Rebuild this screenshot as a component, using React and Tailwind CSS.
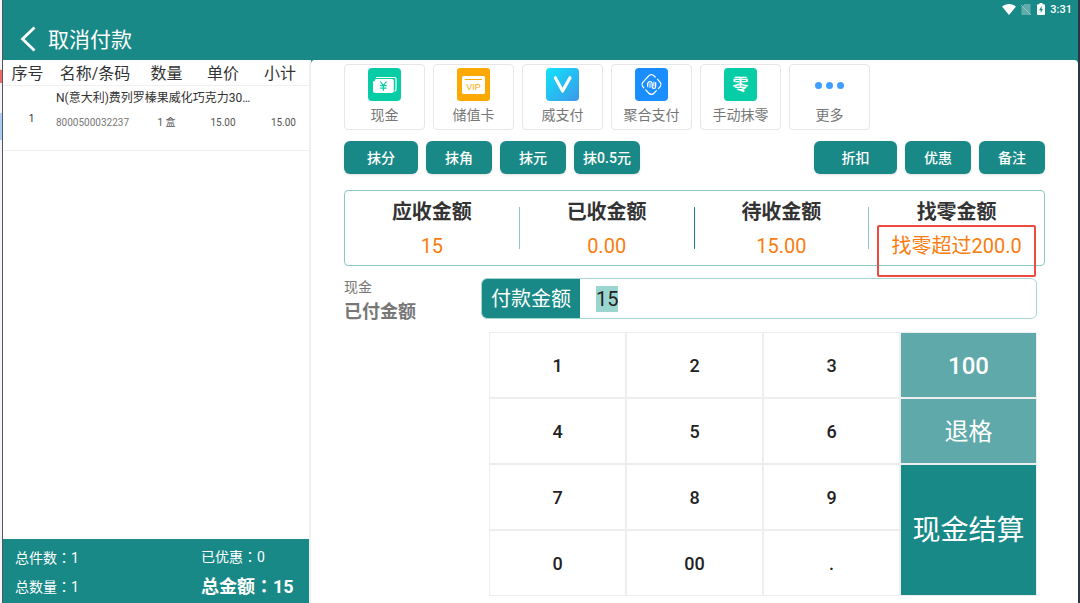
import React, { useEffect, useRef, useState } from 'react';

const CashIcon = () => (
  <svg viewBox="0 0 33 33" className="w-[33px] h-[33px]" aria-hidden="true">
    <rect width="33" height="33" rx="4" fill="#06cda5" />
    <path d="M7.5 11H24a1.8 1.8 0 0 1 1.8 1.8V23a2 2 0 0 1-2 2H7a2 2 0 0 1-2-2v-9.600A2.400 2.400 0 0 0 7.500 11z" fill="#fff" />
    <path d="M8 9.500h18.500a1.500 1.500 0 0 1 1.500 1.500V21.500a1.500 1.500 0 0 1-1.500 1.500" fill="none" stroke="#fff" strokeWidth="1.200" />
    <path d="M12.300 13.500l3.100 4 3.100-4M12.200 17.700h6.400M12.200 20.100h6.400M15.400 17.500v5.300" fill="none" stroke="#06cda5" strokeWidth="1.200" />
  </svg>
);

const VipIcon = () => (
  <svg viewBox="0 0 33 33" className="w-[33px] h-[33px]" aria-hidden="true">
    <rect width="33" height="33" rx="3" fill="#fca903" />
    <rect x="5" y="8" width="23" height="18" rx="1.5" fill="#fff" />
    <path d="M8 11.500h17" stroke="#fca903" strokeWidth="1" />
    <text x="16.500" y="22" textAnchor="middle" fontSize="9" fontFamily="Liberation Sans, sans-serif" fill="#fca903">VIP</text>
  </svg>
);

const WeiIcon = () => (
  <svg viewBox="0 0 33 33" className="w-[33px] h-[33px]" aria-hidden="true">
    <defs>
      <linearGradient id="wei" x1="0" y1="0" x2="1" y2="1">
        <stop offset="0" stopColor="#10e4fb" />
        <stop offset="1" stopColor="#3d97e8" />
      </linearGradient>
    </defs>
    <rect width="33" height="33" rx="4" fill="url(#wei)" />
    <path d="M9.300 9.800L16.600 23 24 9.800" fill="none" stroke="#fff" strokeWidth="3.200" strokeLinecap="round" strokeLinejoin="round" />
  </svg>
);

const UnionIcon = () => (
  <svg viewBox="0 0 33 33" className="w-[33px] h-[33px]" aria-hidden="true">
    <rect width="33" height="33" rx="4" fill="#1b8eff" />
    <g fill="none" stroke="#fff" strokeLinecap="round">
      <path d="M8.800 19.800l-1.200-1.500a3 3 0 0 1 0-3.600L13.600 8a3.600 3.600 0 0 1 5.600 0l1 1" strokeWidth="1.200" />
      <path d="M22.400 11.200l3 3.500a3 3 0 0 1 0 3.600l-2 2.400" strokeWidth="1.200" />
      <path d="M21.400 22.600L19.200 25a3.600 3.600 0 0 1-5.600 0l-2.800-3.200" strokeWidth="1.200" />
      <path d="M12.700 18.500v-3a2.300 2.300 0 0 1 4.500 0v3.200a1.700 1.700 0 0 0 3.400 0v-4" strokeWidth="1.300" />
      <path d="M15 19.500v-4M18.900 18v-4" strokeWidth="1" />
    </g>
  </svg>
);

const RoundIcon = () => (
  <span className="flex items-center justify-center w-[33px] h-[33px] rounded bg-[#06cda5] text-white text-base font-bold leading-none">
    零
  </span>
);

const MoreIcon = () => (
  <svg viewBox="0 0 33 33" className="w-[33px] h-[33px]" fill="#409eff" aria-hidden="true">
    <circle cx="5.500" cy="17.500" r="3.500" />
    <circle cx="16.500" cy="17.500" r="3.500" />
    <circle cx="27.500" cy="17.500" r="3.500" />
  </svg>
);

const METHODS = [
  { name: '现金', Icon: CashIcon },
  { name: '储值卡', Icon: VipIcon },
  { name: '威支付', Icon: WeiIcon },
  { name: '聚合支付', Icon: UnionIcon },
  { name: '手动抹零', Icon: RoundIcon },
  { name: '更多', Icon: MoreIcon },
];

const SUMMARY = [
  { label: '应收金额', value: '15' },
  { label: '已收金额', value: '0.00' },
  { label: '待收金额', value: '15.00' },
  { label: '找零金额', value: '找零超过200.0', warn: true },
];

const ActionButton = ({ wide, children }) => (
  <button
    type="button"
    className={`h-[33px] rounded-md bg-[#198987] text-white text-sm font-medium shadow-sm ${wide || 'w-[66px]'}`}
  >
    {children}
  </button>
);

const Key = ({ children, onClick, className = 'bg-white text-lg font-medium text-[#222]' }) => (
  <button type="button" onClick={onClick} className={`pt-[2px] ${className}`}>
    {children}
  </button>
);

const Colon = () => <span className="font-['Noto_Sans_CJK_TC',sans-serif]">：</span>;

const StatusBar = () => (
  <div className="flex items-center justify-end h-[18px] pr-1.5 text-white">
    <svg viewBox="0 0 14 11" className="w-[14px] h-[11px] mr-[5px]" fill="#fff" aria-hidden="true">
      <path d="M0 2.600C4-.8 10-.8 14 2.600L7 11z" />
    </svg>
    <svg viewBox="0 0 10 11" className="w-[10px] h-[11px] mr-[6px]" aria-hidden="true">
      <path d="M3.500 0H9.500V11H.5V3z" fill="#fff" opacity=".3" />
      <path d="M0 1l10 10" stroke="#8fc6c4" strokeWidth="1" />
    </svg>
    <svg viewBox="0 0 8 12" className="w-[8px] h-[12px] mr-[5px]" aria-hidden="true">
      <path d="M2.500 0h3v1.200H7a1 1 0 0 1 1 1V11a1 1 0 0 1-1 1H1a1 1 0 0 1-1-1V2.200a1 1 0 0 1 1-1h1.500z" fill="#fff" />
      <path d="M4.800 3L2 7.200h1.700V10L6 6H4.500z" fill="#198987" />
    </svg>
    <span className="text-[11px] font-medium leading-none">3:31</span>
  </div>
);

const OrderPanel = () => (
  <section className="flex flex-col w-[308px] shrink-0 bg-white border-r-2 border-[#efefef]">
    <table className="w-full table-fixed border-collapse text-[#333]">
      <colgroup>
        <col className="w-[49px]" />
        <col className="w-[86px]" />
        <col className="w-[57px]" />
        <col className="w-[56px]" />
        <col />
      </colgroup>
      <thead>
        <tr className="h-[25px] text-base leading-[22px] border-b border-[#f0f0f0]">
          {['序号', '名称/条码', '数量', '单价', '小计'].map((h) => (
            <th key={h} className="p-0 pt-[3px] font-normal">{h}</th>
          ))}
        </tr>
      </thead>
      <tbody>
        <tr className="h-[25px] text-xs">
          <td rowSpan={2} className="p-0 pt-[2px] pl-2 text-center text-[10px] border-b border-[#f0f0f0]">1</td>
          <td colSpan={4} className="p-0 pl-1 whitespace-nowrap">N(意大利)费列罗榛果威化巧克力30…</td>
        </tr>
        <tr className="h-10 text-[10px] leading-6 align-top border-b border-[#f0f0f0] text-[#555]">
          <td className="p-0 pl-1 text-[#777]">8000500032237</td>
          <td className="p-0 text-center">1 盒</td>
          <td className="p-0 text-center">15.00</td>
          <td className="p-0 pr-[13px] text-right">15.00</td>
        </tr>
      </tbody>
    </table>

    <div className="mt-auto flex h-16 pt-px bg-[#198987] text-white text-sm">
      <div className="flex-1 flex flex-col justify-center gap-1 pl-3">
        <p className="leading-6">总件数<Colon />1</p>
        <p className="leading-6">总数量<Colon />1</p>
      </div>
      <div className="w-[108px] flex flex-col justify-center gap-1">
        <p className="leading-6">已优惠<Colon />0</p>
        <p className="text-lg leading-6 font-bold">总金额<Colon />15</p>
      </div>
    </div>
  </section>
);

const PayPanel = () => {
  const [amount, setAmount] = useState('15');
  const inputRef = useRef(null);

  useEffect(() => {
    inputRef.current.focus();
    inputRef.current.select();
  }, []);

  const press = (k) => setAmount((a) => a + k);

  return (
    <section className="flex-1 flex flex-col min-w-0 bg-white rounded-t pt-1 px-[33px] pb-[7px]">
      <div className="flex gap-2">
        {METHODS.map(({ name, Icon }) => (
          <button
            key={name}
            type="button"
            className="flex flex-col items-center w-[81px] h-[66px] pt-[3px] border border-[#e6e6e6] rounded text-sm text-[#777]"
          >
            <Icon />
            <span className="mt-1 leading-5">{name}</span>
          </button>
        ))}
      </div>

      <div className="flex gap-2 mt-[11px]">
        <ActionButton wide="w-[74px]">抹分</ActionButton>
        <ActionButton>抹角</ActionButton>
        <ActionButton>抹元</ActionButton>
        <ActionButton>抹0.5元</ActionButton>
        <div className="flex-1" />
        <ActionButton wide="w-[83px]">折扣</ActionButton>
        <ActionButton>优惠</ActionButton>
        <ActionButton>备注</ActionButton>
      </div>

      <dl className="grid grid-cols-4 mt-4 h-[76px] border border-[#8cc7c5] rounded text-xl text-center">
        {SUMMARY.map(({ label, value, warn }, i) => (
          <div key={label} className="flex items-center">
            <div className="relative flex-1 pt-1">
              <dt className="font-bold leading-8 text-[#333]">{label}</dt>
              <dd className="leading-9 text-[#fb7c0e]">{value}</dd>
              {warn && (
                <span className="absolute left-2 right-2 top-[33px] h-[52px] border-2 border-[#ef4a41] rounded-xs" />
              )}
            </div>
            {i < 3 && <span className={`w-px h-[42px] ${i === 1 ? 'bg-[#198987]' : 'bg-[#8cc7c5]'}`} />}
          </div>
        ))}
      </dl>

      <div className="flex flex-1 mt-3 pr-2">
        <div className="w-[137px] shrink-0 text-[#777]">
          <p className="text-sm leading-[18px]">现金</p>
          <p className="mt-0.5 text-lg leading-7 font-bold">已付金额</p>
        </div>

        <div className="flex-1 flex flex-col">
          <div className="flex items-center h-[41px] border border-[#a9d6d3] rounded-md overflow-hidden text-xl">
            <label htmlFor="pay-amount" className="flex items-center justify-center w-[98px] h-full pt-px bg-[#198987] text-white">
              付款金额
            </label>
            <input
              id="pay-amount"
              ref={inputRef}
              value={amount}
              onChange={(e) => setAmount(e.target.value)}
              className="flex-1 min-w-0 h-[26px] ml-4 leading-[26px] text-[#222] outline-none selection:bg-[#9bd5cf] selection:text-[#222]"
            />
          </div>

          <div className="flex-1 grid grid-cols-4 grid-rows-4 gap-[2px] mt-[13px] ml-2 p-px bg-[#eeeeee]">
            {['1', '2', '3'].map((k) => <Key key={k} onClick={() => press(k)}>{k}</Key>)}
            <Key onClick={() => setAmount('100')} className="bg-[#60a9aa] text-white text-2xl font-medium">100</Key>
            {['4', '5', '6'].map((k) => <Key key={k} onClick={() => press(k)}>{k}</Key>)}
            <Key onClick={() => setAmount((a) => a.slice(0, -1))} className="bg-[#60a9aa] text-white text-2xl">退格</Key>
            {['7', '8', '9'].map((k) => <Key key={k} onClick={() => press(k)}>{k}</Key>)}
            <Key className="row-span-2 bg-[#198987] text-white text-[28px]">现金结算</Key>
            {['0', '00', '.'].map((k) => <Key key={k} onClick={() => press(k)}>{k}</Key>)}
          </div>
        </div>
      </div>
    </section>
  );
};

export default function App() {
  return (
    <div className="flex min-h-screen font-['Roboto','Noto_Sans_CJK_SC',sans-serif]">
      {/* edge of the window behind */}
      <div className="w-[2px] shrink-0 bg-[#f4f4f6]">
        <div className="h-[70px] border-b border-[#ddd]" />
        <div className="h-[13px] bg-[#ee6a66]" />
        <div className="mt-[30px] h-[27px] bg-[#a9cdf7]" />
      </div>

      <div className="flex-1 flex flex-col min-w-0 bg-[#198987] border-l border-l-[#55555f] border-r-2 border-r-[#2a3644]">
        <header className="h-[60px] shrink-0">
          <StatusBar />
          <button type="button" className="flex items-center h-[42px] pl-[17px] gap-3 text-white text-[21px]">
            <svg viewBox="0 0 16 26" className="w-4 h-[26px]" fill="none" stroke="#fff" strokeWidth="2.800" aria-hidden="true">
              <path d="M14.500 1.500L2.500 13l12 11.500" />
            </svg>
            <span className="pt-[3px]">取消付款</span>
          </button>
        </header>

        <main className="flex-1 flex">
          <OrderPanel />
          <PayPanel />
        </main>
      </div>
    </div>
  );
}
